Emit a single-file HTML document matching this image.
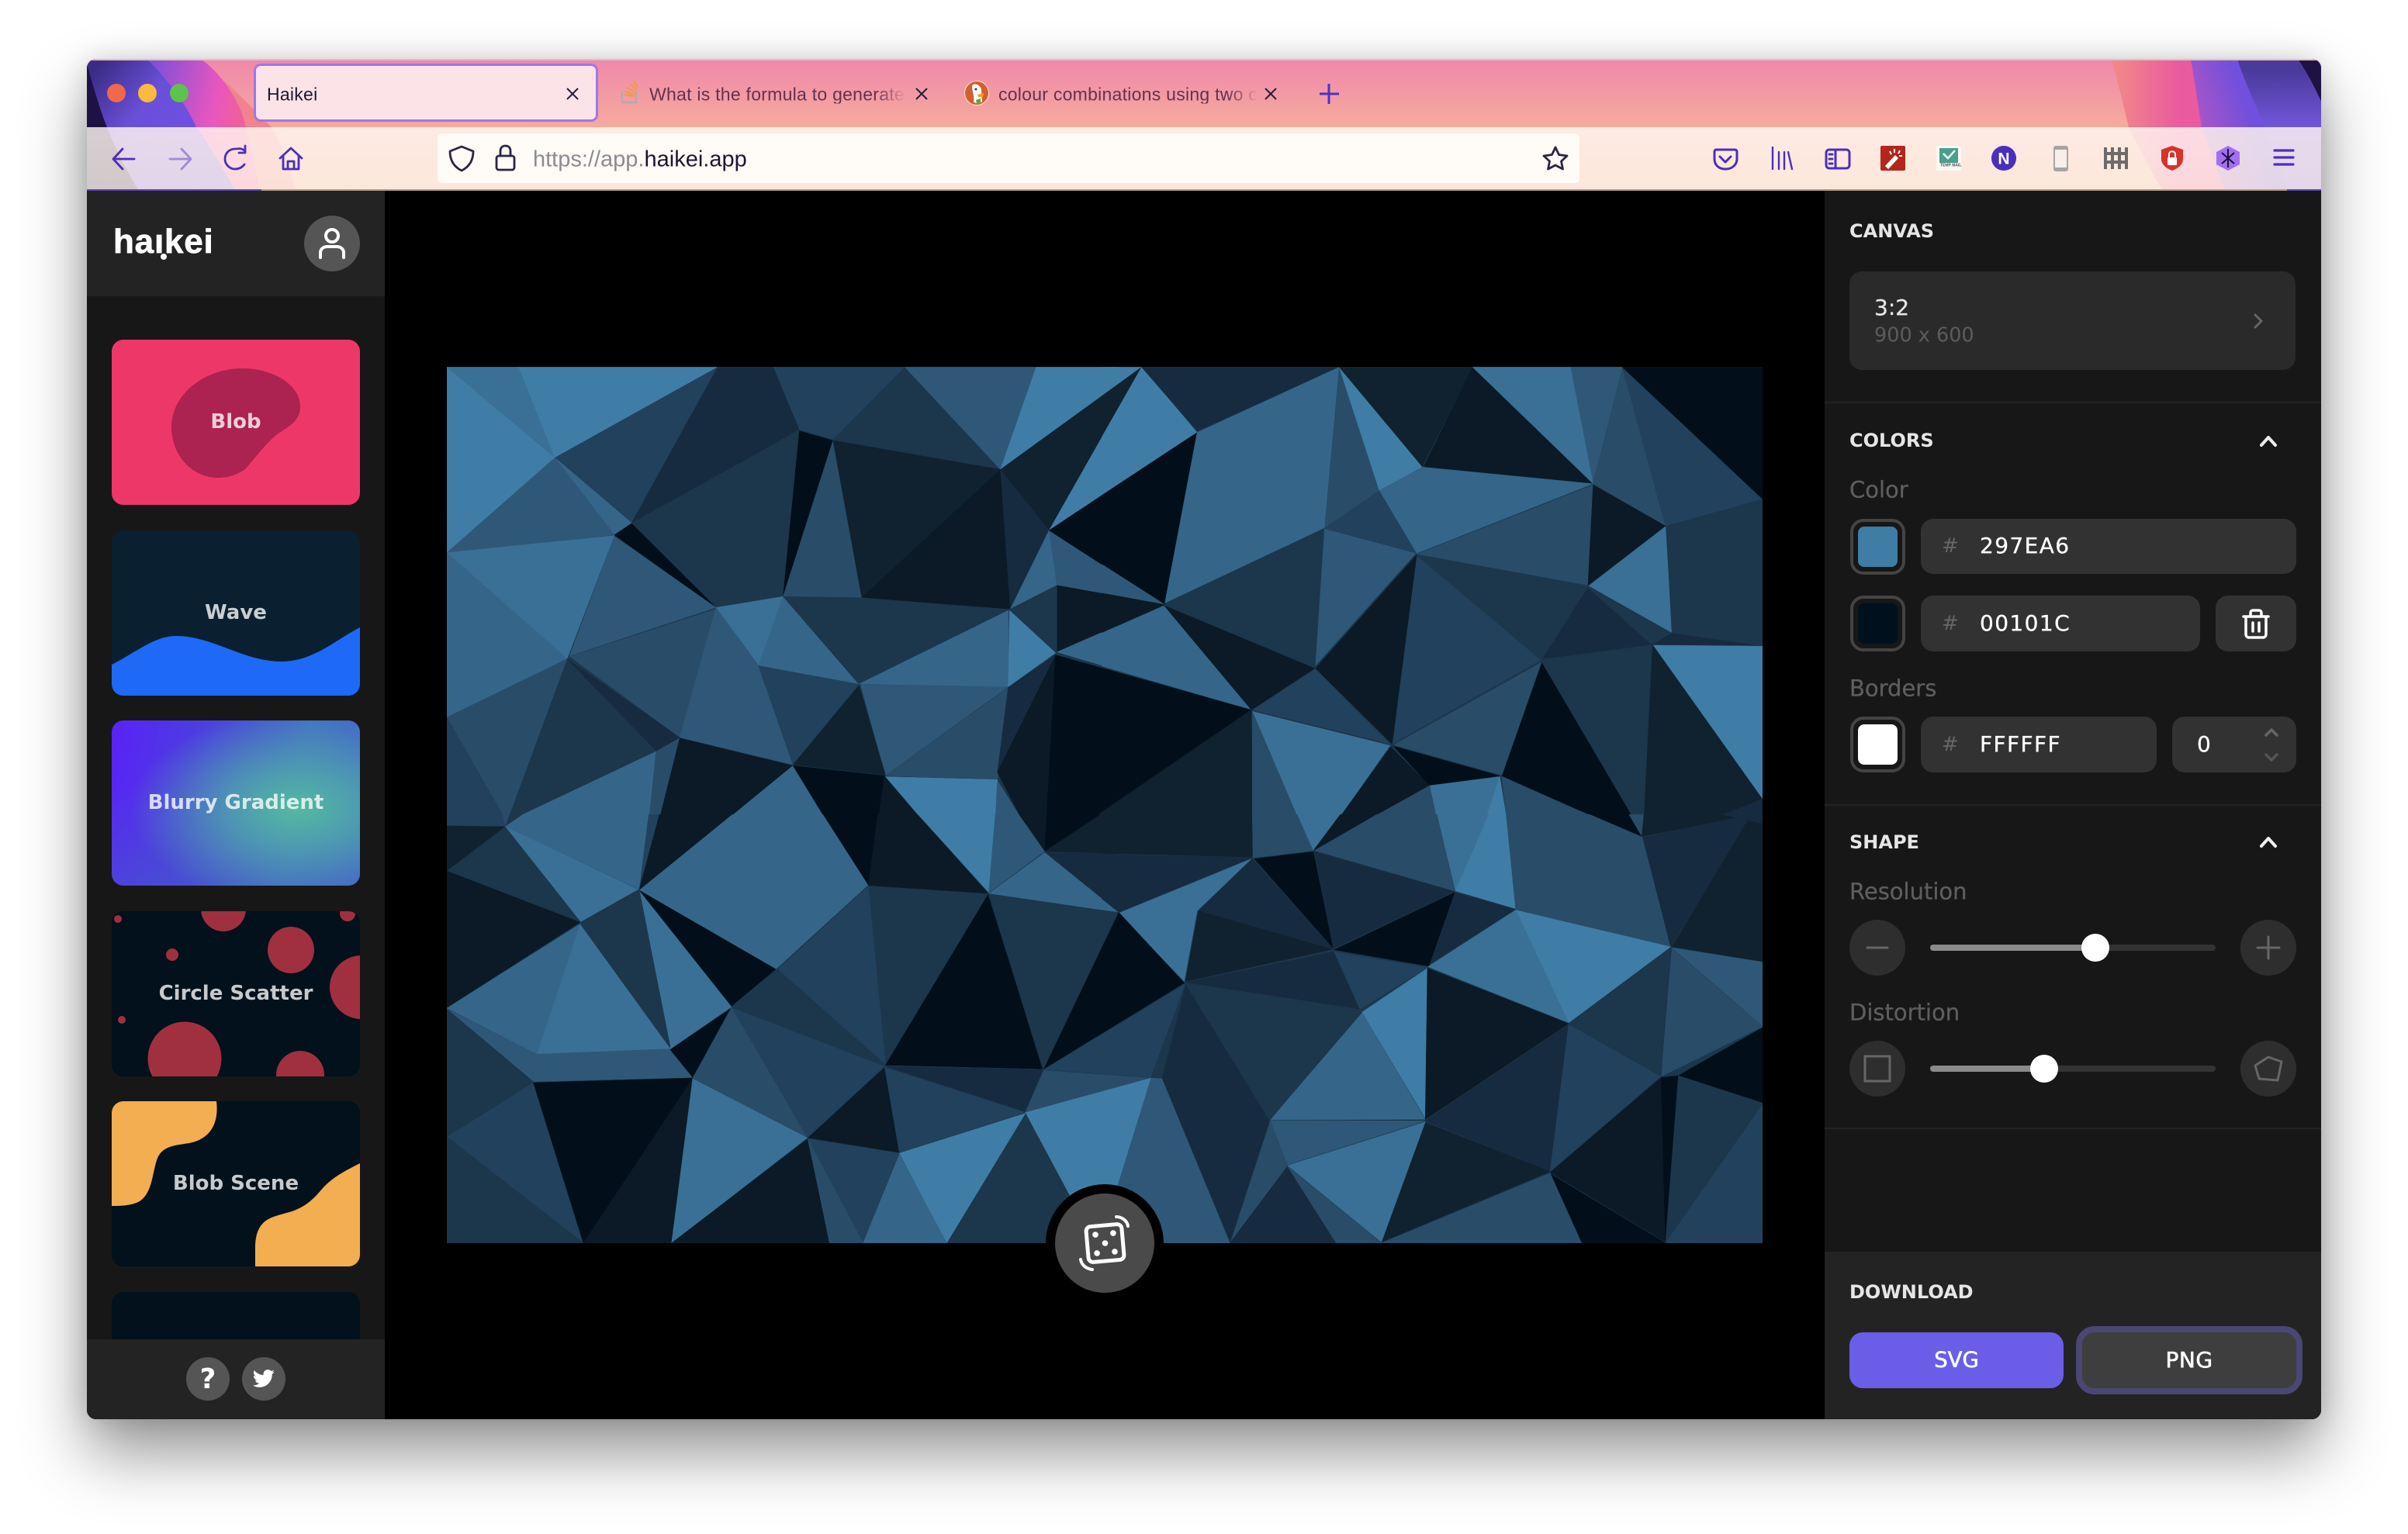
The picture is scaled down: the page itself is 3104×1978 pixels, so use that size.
<!DOCTYPE html>
<html lang="en"><head><meta charset="utf-8"><title>Haikei</title>
<style>
html,body{margin:0;padding:0;background:#fff;width:3104px;height:1978px;overflow:hidden}
#clip{position:absolute;left:0;top:0;width:3104px;height:1978px;clip-path:inset(76px 112px 148px 112px round 12px);background:#000}
#shadow{position:absolute;left:112px;top:76px;width:2880px;height:1754px;border-radius:12px;box-shadow:0 44px 84px rgba(0,0,0,.42),0 0 34px rgba(0,0,0,.14)}
.b{position:absolute}
.t{position:absolute;white-space:nowrap;line-height:1;transform:translateY(-50%);font-family:"DejaVu Sans",sans-serif}
.ff{font-family:"Liberation Sans",sans-serif}
.h{font-weight:700;font-size:24px;color:#e6e6e6;left:2384px}
.lab{font-size:29px;color:#5e5e5e;left:2384px;-webkit-text-stroke:.3px #5e5e5e}
.val{font-size:28px;color:#fff;left:2552px;letter-spacing:1.4px;-webkit-text-stroke:.3px #fff}
.hash{font-size:26px;color:#666;left:2503px}
.inp{position:absolute;background:#323232;border-radius:16px}
.sw{position:absolute;left:2385px;width:71px;height:72px;box-sizing:border-box;border:4px solid #444;border-radius:17px;background:#171717}
.sw i{position:absolute;left:6px;top:6px;width:51px;height:52px;border-radius:8px;display:block}
.card{position:absolute;left:144px;width:320px;height:213px;border-radius:15px;overflow:hidden}
.card svg{position:absolute;left:0;top:0}
.card span{position:absolute;left:0;right:0;top:105.5px;transform:translateY(-50%);text-align:center;font:700 26px/1 "DejaVu Sans",sans-serif;color:rgba(255,255,255,.78);white-space:nowrap}
.l1{fill:#3f7da6;stroke:#3f7da6}.l2{fill:#3a7096;stroke:#3a7096}.l3{fill:#35668a;stroke:#35668a}.l4{fill:#2f5878;stroke:#2f5878}.l5{fill:#294c69;stroke:#294c69}.l6{fill:#22415c;stroke:#22415c}.l7{fill:#1c364c;stroke:#1c364c}.l8{fill:#172b40;stroke:#172b40}.l9{fill:#10222f;stroke:#10222f}.l10{fill:#0b1a26;stroke:#0b1a26}.l11{fill:#020f1a;stroke:#020f1a}
polygon{stroke-width:1}
.tab{letter-spacing:.26px}
</style></head><body>
<div id="shadow"></div>
<div id="clip">

<!-- title bar -->
<svg class="b" style="left:0;top:0" width="3104" height="246" viewBox="0 0 3104 246">
<defs>
<linearGradient id="tb" x1="0" y1="76" x2="0" y2="164" gradientUnits="userSpaceOnUse"><stop offset="0" stop-color="#f087ab"/><stop offset="1" stop-color="#f5ab9d"/></linearGradient>
<linearGradient id="lp" x1="130" y1="80" x2="240" y2="170" gradientUnits="userSpaceOnUse"><stop offset="0" stop-color="#3a2c85"/><stop offset=".55" stop-color="#6a4fd8"/><stop offset="1" stop-color="#6d50e2"/></linearGradient>
<linearGradient id="lm" x1="190" y1="100" x2="310" y2="130" gradientUnits="userSpaceOnUse"><stop offset="0" stop-color="#7c50d8"/><stop offset=".75" stop-color="#e856bf"/><stop offset="1" stop-color="#ee5fa0"/></linearGradient>
<linearGradient id="rm" x1="2730" y1="0" x2="2830" y2="0" gradientUnits="userSpaceOnUse"><stop offset="0" stop-color="#f0868a"/><stop offset=".8" stop-color="#ea5a9e"/></linearGradient>
<linearGradient id="rq" x1="0" y1="90" x2="0" y2="170" gradientUnits="userSpaceOnUse"><stop offset="0" stop-color="#4a3a9a"/><stop offset="1" stop-color="#7558e0"/></linearGradient>
<linearGradient id="rmm" x1="2838" y1="164" x2="2960" y2="120" gradientUnits="userSpaceOnUse"><stop offset="0" stop-color="#a855c8"/><stop offset=".5" stop-color="#7050dc"/></linearGradient>
<linearGradient id="tbar" x1="0" y1="164" x2="0" y2="246" gradientUnits="userSpaceOnUse"><stop offset="0" stop-color="#fff8f2" stop-opacity=".82"/><stop offset="1" stop-color="#fff6ea" stop-opacity=".8"/></linearGradient>
</defs>
<rect x="100" y="70" width="2900" height="176" fill="#f5ab9d"/>
<rect x="100" y="70" width="2900" height="94" fill="url(#tb)"/>
<path d="M255 76 C300 110 335 150 350 164 C365 190 375 220 382 250 L100 250 V76Z" fill="#f0838c"/>
<path d="M259 76 C285 95 310 130 317 164 C325 195 330 225 336 250 L100 250 V76Z" fill="url(#lm)"/>
<path d="M189 76 C215 100 240 135 253 164 C275 195 292 225 306 250 L100 250 V76Z" fill="url(#lp)"/>
<path d="M110 76 C120 110 128 140 138 164 C150 195 165 225 182 250 L100 250 V76Z" fill="#1e1245"/>
<path d="M2722 76 C2730 105 2737 135 2744 164 C2760 195 2775 225 2790 250 L3000 250 V76Z" fill="url(#rm)"/>
<path d="M2824 76 C2830 110 2834 140 2838 164 L2870 250 L3000 250 V76Z" fill="url(#rmm)"/>
<path d="M2884 76 C2895 110 2910 140 2920 164 L2950 250 L3000 250 V76Z" fill="url(#rq)"/>
<path d="M2962 76 C2975 95 2985 115 2994 135 V76Z" fill="#1e1245"/>
<rect x="100" y="164" width="2900" height="82" fill="url(#tbar)"/>
<rect x="100" y="76" width="2900" height="2" fill="#e8b8c4"/>
<rect x="100" y="244" width="2900" height="2" fill="#b09a8c"/>
<rect x="112" y="244" width="225" height="2" fill="#5a46b0"/>
<rect x="2948" y="244" width="44" height="2" fill="#5a46b0"/>
<circle cx="150" cy="120" r="12" fill="#f0684e"/><circle cx="190" cy="120" r="12" fill="#f8bb3e"/><circle cx="231" cy="120" r="12" fill="#5ec24e"/>
</svg>

<!-- active tab -->
<div class="b" style="left:327px;top:82px;width:444px;height:75px;box-sizing:border-box;border:3px solid #9c78ea;border-radius:9px;background:#fbe3e8"></div>
<div class="t ff tab" style="left:344px;top:122px;font-size:23px;color:#1c1630">Haikei</div>
<svg class="b" style="left:0;top:0" width="3104" height="246" viewBox="0 0 3104 246" fill="none" stroke="#241c3c" stroke-width="2">
<path d="M731 114L745 128M745 114L731 128"/><path d="M1181 114L1195 128M1195 114L1181 128"/><path d="M1631 114L1645 128M1645 114L1631 128"/>
<path d="M1713 108V134M1701 121H1726" stroke="#5030c8" stroke-width="3"/>
<!-- nav -->
<g stroke="#4a2fbd" stroke-width="2.8" stroke-linecap="round" stroke-linejoin="round">
<path d="M146 205H173M158 192L146 205L158 218"/>
<path d="M219 205H246M234 192L246 205L234 218" opacity=".45"/>
<path d="M316 195C311 190 306 192 303 192C295 192 290 198 290 205C290 212 296 218 303 218C308 218 312 216 315 212"/><path d="M316 188V197H308" />
<path d="M361 204L375 191L389 204M365 201V218H385V201M371 218V208H379V218"/>
</g>
<!-- so icon -->
<g stroke="#f09a50" stroke-width="2.4"><path d="M805 122L817 124M806 118L818 122M808 113L819 119M812 108L821 116M817 104L822 113"/></g>
<path d="M802 118V132H820V118" stroke="#b8a8a8" stroke-width="2.4"/>
</svg>
<!-- ddg -->
<svg class="b" style="left:1243px;top:104px" width="32" height="32" viewBox="0 0 32 32"><circle cx="16" cy="16" r="15.500" fill="#d2602f" stroke="#f6e4d8" stroke-width="1"/><path d="M11 5C17 3 23 8 22 15L23 27C18 30 13 29 12 27C14 20 8 10 11 5Z" fill="#fff"/><circle cx="15" cy="11" r="1.500" fill="#2a3a6a"/><path d="M17 18L25 16L24 21L18 21Z" fill="#f0a020"/><path d="M15 25L21 23L21 28L16 29Z" fill="#5aa040"/></svg>
<div class="t ff tab" style="left:837px;top:122px;width:331px;overflow:hidden;font-size:23px;color:#66304e;-webkit-mask-image:linear-gradient(90deg,#000 88%,transparent 100%);mask-image:linear-gradient(90deg,#000 88%,transparent 100%)">What is the formula to generate a random colour</div>
<div class="t ff tab" style="left:1287px;top:122px;width:335px;overflow:hidden;font-size:23px;color:#66304e;-webkit-mask-image:linear-gradient(90deg,#000 88%,transparent 100%);mask-image:linear-gradient(90deg,#000 88%,transparent 100%)">colour combinations using two colours</div>

<!-- url -->
<div class="b" style="left:564px;top:172px;width:1472px;height:64px;border-radius:6px;background:#fffbf6"></div>
<svg class="b" style="left:0;top:0" width="3104" height="246" viewBox="0 0 3104 246" fill="none">
<g stroke="#2b2540" stroke-width="2.8" stroke-linecap="round" stroke-linejoin="round">
<path d="M595 189L610 195C610 207 605 215 595 220C585 215 580 207 580 195Z"/>
<rect x="640" y="201" width="23" height="18" rx="3"/><path d="M645 201V195C645 190 648 188 651.500 188C655 188 658 190 658 195V201"/>
<path d="M2005 190L2009.500 199.500L2020 201L2012.500 208L2014.500 218L2005 213L1995.500 218L1997.500 208L1990 201L2000.500 199.500Z"/>
</g>
<!-- toolbar icons -->
<g stroke="#4a2fbd" stroke-width="3" stroke-linecap="round" stroke-linejoin="round">
<path d="M2212 193H2236C2238 193 2239 194 2239 196V205C2239 213 2232 218 2224 218C2216 218 2210 213 2210 205V196C2210 194 2211 193 2212 193Z"/><path d="M2217 202L2224 209L2231 202"/>
<path d="M2285 190V218M2293 196V218M2300 196V218M2305 196L2310 218" stroke-width="2.400"/>
<rect x="2354" y="193" width="30" height="24" rx="4"/><path d="M2366 193V217M2358 199H2362M2358 205H2362M2358 211H2362"/>
<path d="M2932 194H2956M2932 203H2956M2932 212H2956" stroke-width="3.200"/>
</g>
<rect x="2424" y="188" width="32" height="32" rx="2" fill="#b3261c"/>
<path d="M2430 214L2443 200L2447 204L2434 218Z" fill="#fff"/><path d="M2442 192V197M2449 194L2447 198M2452 201H2448M2436 195L2438 199" stroke="#fff" stroke-width="2"/>
<rect x="2496" y="188" width="32" height="32" rx="2" fill="#fbf8f4"/><rect x="2500" y="191" width="24" height="19" fill="#4aa08c"/><path d="M2505 198L2511 204L2520 194" stroke="#fff" stroke-width="2.400"/>
<circle cx="2583" cy="204" r="16" fill="#4a2fbd"/>
<rect x="2648" y="189" width="17" height="31" rx="2" fill="#f8efe9" stroke="#a8a4a4" stroke-width="2"/><rect x="2648" y="189" width="17" height="4" fill="#a8a4a4"/><rect x="2648" y="216" width="17" height="4" fill="#a8a4a4"/>
<g stroke="#6e6a6a" stroke-width="4"><path d="M2714 190V218M2723 190V218M2732 190V218M2741 190V218M2712 198H2743M2712 209H2743" /></g>
<path d="M2800 188L2814 193V205C2814 212 2808 217 2800 220C2792 217 2786 212 2786 205V193Z" fill="#d8322a"/><rect x="2794" y="203" width="12" height="10" rx="1" fill="#fff"/><path d="M2796 203V199C2796 194 2804 194 2804 199V203" stroke="#fff" stroke-width="2"/>
<path d="M2872 188L2887 196V212L2872 220L2857 212V196Z" fill="#a36ef0"/><path d="M2872 192V216M2864 197L2880 211M2880 197L2864 211" stroke="#1c1040" stroke-width="2"/>
</svg>
<div class="t" style="left:2574px;top:205px;width:18px;text-align:center;font:700 21px/1 'Liberation Sans',sans-serif;color:#fff">N</div>
<div class="t ff" style="left:2501px;top:214px;font-size:5px;font-weight:700;color:#555">TEMP MAIL</div>
<div class="t ff" style="left:687px;top:206px;font-size:29px;color:#8e8a94">https://app.<span style="color:#1c1630">haikei.app</span></div>

<!-- sidebar -->
<div class="b" style="left:112px;top:246px;width:384px;height:1590px;background:#171717"></div>
<div class="b" style="left:112px;top:246px;width:384px;height:136px;background:#232323"></div>
<div class="t ff" style="left:146px;top:312px;font-size:44px;font-weight:700;color:#fff;letter-spacing:.8px;-webkit-text-stroke:.7px #fff">ha<span>ı</span>kei</div>
<div class="b" style="left:207px;top:327px;width:8px;height:8px;border-radius:50%;background:#fff"></div>
<div class="b" style="left:392px;top:278px;width:72px;height:72px;border-radius:50%;background:#555"></div>
<svg class="b" style="left:392px;top:278px" width="72" height="72" viewBox="392 278 72 72" fill="none" stroke="#fff" stroke-width="4" stroke-linecap="round"><circle cx="428" cy="304" r="8"/><path d="M413 332V326C413 321 417 318 422 318H434C439 318 443 321 443 326V332"/></svg>

<div class="card" style="top:438px;background:#ee3769">
<svg width="320" height="213"><path d="M169 37C205 37 243 56 243 87C243 102 232 110 219 118C205 127 195 140 172 167C160 175 150 178 136 178C105 178 77 150 77 113C77 70 120 37 169 37Z" fill="#ac2250"/></svg><span>Blob</span></div>
<div class="card" style="top:684px;background:#0a2030">
<svg width="320" height="213"><path d="M0 173C30 158 55 136 83 136C130 136 170 169 219 169C260 169 290 140 320 125V213H0Z" fill="#1f69f8"/></svg><span>Wave</span></div>
<div class="card" style="top:929px;background:radial-gradient(ellipse 215px 125px at 239px 114px,#54b9a0 0%,rgba(80,170,170,.78) 38%,rgba(70,125,190,0) 100%),linear-gradient(180deg,rgba(70,90,200,0) 40%,rgba(70,90,200,.5) 100%),linear-gradient(100deg,#5a22f8 0%,#4c3ce0 30%,#4370c4 72%,#4462cc 100%)"><span>Blurry Gradient</span></div>
<div class="card" style="top:1175px;background:#02111c">
<svg width="320" height="213" fill="#a03040"><circle cx="144" cy="-3" r="29"/><circle cx="8" cy="10" r="5"/><circle cx="304" cy="3" r="10"/><circle cx="231" cy="50" r="30"/><circle cx="78" cy="56" r="8"/><circle cx="322" cy="98" r="41"/><circle cx="13" cy="140" r="5"/><circle cx="94" cy="190" r="47.500"/><circle cx="243" cy="211" r="31"/></svg><span>Circle Scatter</span></div>
<div class="card" style="top:1420px;background:#02111c">
<svg width="320" height="213" fill="#f2ae50"><path d="M0 0H135C138 25 130 48 100 54C80 57 64 58 58 76C52 95 52 118 36 129C25 135 10 135 0 135Z"/><path d="M320 80C300 90 285 98 272 112C262 124 250 138 225 144C205 150 185 152 185 190V213H320Z"/></svg><span>Blob Scene</span></div>
<div class="card" style="top:1666px;background:#02111c"></div>

<div class="b" style="left:112px;top:1727px;width:384px;height:110px;background:#232323"></div>
<div class="b" style="left:240px;top:1750px;width:56px;height:56px;border-radius:50%;background:#555"></div>
<div class="b" style="left:312px;top:1750px;width:56px;height:56px;border-radius:50%;background:#555"></div>
<div class="t" style="left:240px;top:1779px;width:56px;text-align:center;font:700 36px/1 'DejaVu Sans',sans-serif;color:#fff">?</div>
<svg class="b" style="left:325px;top:1763px" width="30" height="30" viewBox="0 0 24 24" fill="#fff"><path d="M23 4.500c-.8.400-1.700.600-2.600.800.900-.600 1.600-1.400 2-2.500-.900.500-1.800.900-2.900 1.100C18.700 2.900 17.500 2.400 16.200 2.400c-2.500 0-4.600 2-4.600 4.600 0 .400 0 .700.100 1C7.900 7.800 4.500 6 2.200 3.200c-.400.700-.600 1.500-.600 2.300 0 1.600.800 3 2 3.800-.800 0-1.500-.200-2.100-.6v.1c0 2.200 1.600 4.100 3.700 4.500-.400.100-.800.200-1.200.200-.300 0-.600 0-.900-.100.600 1.800 2.300 3.200 4.300 3.200-1.600 1.200-3.600 2-5.700 2-.400 0-.700 0-1.100-.1C2.600 19.900 5 20.600 7.600 20.600c8.400 0 13-7 13-13v-.6c.900-.6 1.700-1.500 2.400-2.500z"/></svg>

<!-- canvas -->
<svg class="b" style="left:576px;top:473px" width="1696" height="1130" viewBox="576 473 1696 1130">
<rect x="576" y="473" width="1696" height="1130" fill="#1c364c"/>
<svg x="570" y="460" width="870" height="600" viewBox="0 0 1568 1568" preserveAspectRatio="none">
<polygon class="l1" points="11,35 262,340 11,660"/>
<polygon class="l2" points="11,35 178,35 262,340"/>
<polygon class="l1" points="178,35 640,35 262,340"/>
<polygon class="l6" points="262,340 640,35 440,560"/>
<polygon class="l8" points="640,35 770,35 830,245 440,560"/>
<polygon class="l6" points="770,35 1075,35 908,280 830,245"/>
<polygon class="l7" points="1075,35 1297,380 908,280"/>
<polygon class="l4" points="1075,35 1380,35 1297,380"/>
<polygon class="l1" points="1380,35 1625,35 1297,380"/>
<polygon class="l9" points="1297,380 1625,35 1410,585"/>
<polygon class="l1" points="1625,35 1753,255 1410,585"/>
<polygon class="l3" points="262,340 440,560 400,600"/>
<polygon class="l4" points="262,340 400,600 11,660"/>
<polygon class="l7" points="440,560 830,250 792,808 636,845"/>
<polygon class="l11" points="400,600 440,562 636,845"/>
<polygon class="l11" points="830,250 908,282 792,808"/>
<polygon class="l5" points="908,282 975,812 792,808"/>
<polygon class="l9" points="908,282 1297,380 975,812"/>
<polygon class="l10" points="1297,380 1320,850 975,812"/>
<polygon class="l8" points="1297,380 1410,585 1320,850"/>
<polygon class="l3" points="1410,585 1428,770 1320,850"/>
<polygon class="l4" points="1410,585 1676,835 1428,770"/>
<polygon class="l11" points="1410,585 1753,255 1676,835"/>
<polygon class="l10" points="1428,770 1676,835 1428,995"/>
<polygon class="l7" points="1320,850 1428,770 1428,995"/>
<polygon class="l2" points="11,660 400,602 290,1018"/>
<polygon class="l4" points="400,605 636,845 296,1008"/>
<polygon class="l3" points="11,660 290,1018 11,1215"/>
<polygon class="l5" points="296,1010 636,850 552,1283"/>
<polygon class="l2" points="636,845 792,808 735,1040"/>
<polygon class="l3" points="792,808 968,1103 735,1040"/>
<polygon class="l4" points="636,845 735,1040 815,1375 552,1283"/>
<polygon class="l6" points="735,1042 968,1103 815,1375"/>
<polygon class="l7" points="792,808 975,812 1320,852 968,1103"/>
<polygon class="l3" points="968,1103 1315,855 1315,1112"/>
<polygon class="l1" points="1318,855 1425,998 1315,1112"/>
<polygon class="l4" points="972,1105 1315,1112 1030,1410"/>
<polygon class="l5" points="1315,1115 1290,1425 1030,1412"/>
<polygon class="l9" points="968,1108 1030,1410 815,1375"/>
<polygon class="l7" points="290,1018 497,1328 150,1568"/>
<polygon class="l8" points="290,1018 552,1283 497,1328"/>
<polygon class="l5" points="11,1215 290,1018 150,1568"/>
<polygon class="l6" points="11,1215 150,1568 11,1568"/>
<polygon class="l3" points="497,1330 480,1568 150,1568"/>
<polygon class="l5" points="552,1285 497,1330 480,1568 503,1568"/>
<polygon class="l10" points="552,1285 815,1378 655,1568 503,1568"/>
<polygon class="l3" points="815,1378 895,1568 655,1568"/>
<polygon class="l11" points="815,1378 1028,1412 1012,1568 895,1568"/>
<polygon class="l10" points="1028,1412 1120,1568 1012,1568"/>
<polygon class="l1" points="1030,1415 1290,1425 1285,1568 1120,1568"/>
<polygon class="l4" points="1290,1428 1350,1568 1285,1568"/>
<polygon class="l8" points="1315,1115 1425,1005 1290,1400"/>
<polygon class="l10" points="1290,1400 1425,1005 1405,1568 1350,1568"/>
<polygon class="l11" points="1425,1005 1880,1190 1400,1665"/>
<polygon class="l9" points="1400,1665 1880,1190 1880,1665"/>
<polygon class="l3" points="1428,995 1676,838 1880,1190"/>
</svg>
<svg x="1420" y="460" width="870" height="600" viewBox="0 0 1568 1568" preserveAspectRatio="none">
<polygon class="l1" points="-152,35 93,35 -235,380"/>
<polygon class="l9" points="-235,380 93,35 -122,585"/>
<polygon class="l1" points="93,35 222,255 -123,585"/>
<polygon class="l11" points="-123,585 222,255 147,835"/>
<polygon class="l4" points="-123,585 147,835 -100,770"/>
<polygon class="l10" points="-100,770 147,835 -100,995"/>
<polygon class="l3" points="-104,998 147,838 348,1190"/>
<polygon class="l11" points="-107,1005 348,1190 -132,1665"/>
<polygon class="l9" points="-132,1665 348,1190 352,1665"/>
<polygon class="l8" points="93,35 552,35 222,250"/>
<polygon class="l3" points="222,255 552,35 520,575 147,830"/>
<polygon class="l5" points="552,35 645,450 518,578"/>
<polygon class="l1" points="552,35 745,372 645,450"/>
<polygon class="l9" points="552,35 862,35 745,370"/>
<polygon class="l10" points="862,35 1142,428 748,372"/>
<polygon class="l2" points="862,35 1090,35 1142,428"/>
<polygon class="l4" points="1090,35 1210,35 1142,420"/>
<polygon class="l5" points="1210,35 1310,570 1142,428"/>
<polygon class="l6" points="1210,35 1536,480 1310,570"/>
<polygon class="l11" points="1210,35 1536,35 1536,480"/>
<polygon class="l3" points="645,450 748,372 1142,428 732,662"/>
<polygon class="l6" points="518,578 645,452 730,660"/>
<polygon class="l5" points="732,665 1142,432 1130,770"/>
<polygon class="l10" points="1142,432 1310,570 1130,770"/>
<polygon class="l2" points="1310,572 1325,930 1132,772"/>
<polygon class="l7" points="1312,572 1536,480 1536,975 1325,932"/>
<polygon class="l7" points="148,835 518,580 497,1048"/>
<polygon class="l4" points="518,580 730,662 497,1040"/>
<polygon class="l7" points="730,668 1130,775 1020,1020"/>
<polygon class="l6" points="730,668 1020,1022 675,1305"/>
<polygon class="l10" points="732,668 675,1305 497,1050"/>
<polygon class="l10" points="145,838 495,1050 348,1190"/>
<polygon class="l6" points="497,1052 670,1305 352,1190"/>
<polygon class="l2" points="350,1195 670,1310 545,1568 460,1568"/>
<polygon class="l5" points="350,1195 460,1568 350,1568"/>
<polygon class="l8" points="1130,778 1278,970 1025,1018"/>
<polygon class="l7" points="1130,778 1325,932 1278,970"/>
<polygon class="l8" points="1325,932 1536,975 1280,970"/>
<polygon class="l7" points="1025,1022 1278,972 1260,1568"/>
<polygon class="l9" points="1280,972 1536,1490 1536,1568 1260,1568"/>
<polygon class="l1" points="1282,972 1536,975 1536,1490"/>
<polygon class="l11" points="1022,1030 1240,1568 1170,1568 930,1412"/>
<polygon class="l5" points="1022,1030 930,1410 678,1308"/>
<polygon class="l11" points="678,1312 925,1412 762,1445"/>
<polygon class="l10" points="672,1315 762,1445 610,1568 545,1568"/>
<polygon class="l2" points="762,1445 925,1415 890,1568 780,1568"/>
<polygon class="l1" points="925,1415 942,1568 890,1568"/>
<polygon class="l5" points="930,1415 1170,1568 942,1568"/>
<polygon class="l5" points="762,1445 780,1568 610,1568"/>
<polygon class="l8" points="1536,1490 1536,1568 1400,1568"/>
</svg>
<svg x="570" y="1050" width="870" height="620" viewBox="0 0 1568 1568" preserveAspectRatio="none">
<polygon class="l6" points="11,0 140,0 147,40 11,35"/>
<polygon class="l5" points="140,0 157,0 147,40"/>
<polygon class="l7" points="157,0 188,0 147,40"/>
<polygon class="l9" points="11,38 147,40 11,185"/>
<polygon class="l7" points="147,40 320,352 11,185"/>
<polygon class="l10" points="11,185 320,352 11,630"/>
<polygon class="l2" points="147,40 455,245 322,350"/>
<polygon class="l3" points="147,40 188,0 480,0 458,245"/>
<polygon class="l6" points="480,0 505,0 458,245"/>
<polygon class="l10" points="505,0 675,0 458,245"/>
<polygon class="l3" points="675,0 885,0 990,230 775,505 458,248"/>
<polygon class="l11" points="885,0 1012,0 990,230"/>
<polygon class="l10" points="1012,0 1105,0 1268,258 990,232"/>
<polygon class="l1" points="1105,0 1285,0 1270,255"/>
<polygon class="l4" points="1285,0 1340,0 1400,120 1270,255"/>
<polygon class="l10" points="1340,0 1405,0 1400,120"/>
<polygon class="l11" points="1405,0 1530,0 1400,120"/>
<polygon class="l9" points="1530,0 1700,0 1700,130 1400,122"/>
<polygon class="l8" points="1400,125 1700,130 1572,320"/>
<polygon class="l3" points="1400,125 1572,320 1270,258"/>
<polygon class="l7" points="990,235 1268,260 1030,815"/>
<polygon class="l6" points="990,235 1030,815 780,505"/>
<polygon class="l11" points="458,248 775,505 672,625"/>
<polygon class="l2" points="458,250 672,628 530,765"/>
<polygon class="l7" points="458,248 320,355 530,760"/>
<polygon class="l2" points="320,358 530,765 220,782"/>
<polygon class="l3" points="320,358 220,782 11,632"/>
<polygon class="l4" points="11,635 220,782 530,765 582,858 212,872"/>
<polygon class="l11" points="530,768 672,632 582,858"/>
<polygon class="l7" points="775,508 1028,820 672,628"/>
<polygon class="l6" points="672,630 1028,822 848,1055"/>
<polygon class="l5" points="672,630 848,1055 582,860"/>
<polygon class="l7" points="11,635 212,872 11,1052"/>
<polygon class="l6" points="11,1052 212,875 328,1398"/>
<polygon class="l7" points="11,1052 328,1398 11,1398"/>
<polygon class="l11" points="212,875 582,860 328,1398"/>
<polygon class="l10" points="582,862 533,1398 328,1398"/>
<polygon class="l2" points="582,862 848,1055 533,1398"/>
<polygon class="l10" points="848,1060 900,1398 533,1398"/>
<polygon class="l6" points="850,1058 1062,1105 978,1398 900,1398"/>
<polygon class="l5" points="850,1060 978,1398 900,1398"/>
<polygon class="l10" points="850,1055 1028,825 1062,1103"/>
<polygon class="l6" points="1028,825 1355,972 1062,1103"/>
<polygon class="l8" points="1030,822 1395,832 1355,970"/>
<polygon class="l11" points="1030,818 1268,262 1395,830"/>
<polygon class="l7" points="1270,262 1568,320 1395,830"/>
<polygon class="l11" points="1572,320 1723,550 1398,830"/>
<polygon class="l6" points="1398,832 1725,555 1647,858"/>
<polygon class="l5" points="1398,835 1647,860 1355,970"/>
<polygon class="l1" points="1355,972 1647,860 1570,1205 1640,1398 1460,1250"/>
<polygon class="l7" points="1355,975 1460,1250 1500,1398 1172,1398"/>
<polygon class="l1" points="1062,1105 1355,975 1172,1398"/>
<polygon class="l3" points="1062,1110 1172,1398 978,1398"/>
</svg>
<svg x="1420" y="1050" width="870" height="620" viewBox="0 0 1568 1568" preserveAspectRatio="none">
<polygon class="l9" points="-132,0 350,0 350,140 -132,122"/>
<polygon class="l5" points="350,0 455,0 492,118 352,142"/>
<polygon class="l2" points="455,0 555,0 492,118"/>
<polygon class="l10" points="555,0 640,0 492,118"/>
<polygon class="l5" points="640,0 780,0 820,250 495,118"/>
<polygon class="l2" points="780,0 900,0 822,250"/>
<polygon class="l1" points="900,0 940,0 962,308 822,250"/>
<polygon class="l5" points="940,0 1135,0 1255,72 1322,432 962,310"/>
<polygon class="l11" points="1135,0 1225,0 1255,72"/>
<polygon class="l5" points="1225,0 1262,0 1255,72"/>
<polygon class="l9" points="1260,0 1520,0 1255,72"/>
<polygon class="l8" points="1258,75 1510,0 1322,432"/>
<polygon class="l9" points="1510,0 1536,0 1536,480 1325,432"/>
<polygon class="l8" points="1440,0 1536,-10 1536,30"/>
<polygon class="l4" points="1325,435 1536,482 1536,690"/>
<polygon class="l5" points="1325,438 1536,692 1300,855"/>
<polygon class="l7" points="1320,438 1300,855 1085,682"/>
<polygon class="l1" points="962,312 1322,432 1085,680"/>
<polygon class="l2" points="962,312 1085,680 758,497"/>
<polygon class="l8" points="820,255 962,310 760,490"/>
<polygon class="l11" points="820,255 760,495 540,442"/>
<polygon class="l8" points="495,122 820,252 537,438"/>
<polygon class="l11" points="355,145 492,122 537,435"/>
<polygon class="l8" points="350,145 537,438 225,315"/>
<polygon class="l9" points="225,315 537,440 195,545"/>
<polygon class="l8" points="540,448 600,635 195,548"/>
<polygon class="l6" points="540,448 757,500 600,635"/>
<polygon class="l1" points="757,502 752,990 605,645"/>
<polygon class="l10" points="757,502 1085,682 752,995"/>
<polygon class="l8" points="752,1000 1085,685 1042,1165"/>
<polygon class="l6" points="1085,685 1298,855 1042,1165"/>
<polygon class="l10" points="1300,858 1310,1395 1042,1168"/>
<polygon class="l11" points="1300,858 1340,852 1310,1398"/>
<polygon class="l11" points="1340,852 1536,695 1536,940"/>
<polygon class="l7" points="1340,852 1536,942 1310,1398"/>
<polygon class="l6" points="1536,945 1536,1398 1310,1398"/>
<polygon class="l11" points="1042,1172 1310,1398 1115,1398"/>
<polygon class="l5" points="1042,1170 1115,1398 650,1398"/>
<polygon class="l9" points="752,1005 1042,1165 650,1395"/>
<polygon class="l2" points="752,1003 650,1395 432,1145"/>
<polygon class="l4" points="392,998 752,1000 432,1142"/>
<polygon class="l3" points="605,648 752,995 392,996"/>
<polygon class="l7" points="600,645 392,996 195,550"/>
<polygon class="l8" points="195,555 140,858 298,1395 390,1000"/>
<polygon class="l3" points="-132,125 40,320 -262,258"/>
<polygon class="l8" points="-132,125 350,142 40,320"/>
<polygon class="l2" points="40,322 348,145 222,315 192,545"/>
<polygon class="l7" points="-262,262 40,320 -137,830"/>
<polygon class="l11" points="40,320 192,550 -134,830"/>
<polygon class="l6" points="-134,832 193,555 115,858"/>
<polygon class="l7" points="195,555 115,858 140,858"/>
<polygon class="l5" points="-134,835 115,860 -177,970"/>
<polygon class="l1" points="-177,972 115,860 38,1205 108,1398 -72,1250"/>
<polygon class="l4" points="115,860 140,862 38,1210"/>
<polygon class="l4" points="140,862 298,1398 20,1398 38,1210"/>
<polygon class="l5" points="392,1000 432,1145 300,1395"/>
<polygon class="l8" points="432,1148 545,1398 298,1398"/>
<polygon class="l5" points="432,1148 650,1398 545,1398"/>
</svg>
</svg>
<!-- dice -->
<svg class="b" style="left:1340px;top:1520px" width="170" height="170" viewBox="1340 1520 170 170">
<circle cx="1424" cy="1603" r="76" fill="#000"/><circle cx="1424" cy="1603" r="64" fill="#4a4a4a"/>
<g transform="rotate(-5 1424.500 1603)"><rect x="1401.500" y="1580" width="46" height="46" rx="6" fill="none" stroke="#fff" stroke-width="5"/>
<g fill="#fff"><circle cx="1413" cy="1591" r="3.800"/><circle cx="1436" cy="1591" r="3.800"/><circle cx="1424.500" cy="1603" r="3.800"/><circle cx="1413" cy="1615" r="3.800"/><circle cx="1436" cy="1615" r="3.800"/></g></g>
<path d="M1439 1569C1446 1569 1453 1574 1454 1581M1393 1624C1394 1631 1400 1636 1408 1637" fill="none" stroke="#fff" stroke-width="4" stroke-linecap="round"/>
</svg>

<!-- right panel -->
<div class="b" style="left:2352px;top:246px;width:640px;height:1590px;background:#171717"></div>
<div class="b" style="left:2352px;top:518px;width:640px;height:2px;background:#222"></div>
<div class="b" style="left:2352px;top:1037px;width:640px;height:2px;background:#222"></div>
<div class="b" style="left:2352px;top:1454px;width:640px;height:2px;background:#222"></div>
<div class="b" style="left:2352px;top:1614px;width:640px;height:222px;background:#232323"></div>

<div class="t h" style="top:298px">CANVAS</div>
<div class="b" style="left:2384px;top:350px;width:575px;height:127px;background:#2a2a2a;border-radius:16px"></div>
<div class="t" style="left:2416px;top:397px;font-size:28px;color:#e6e6e6;-webkit-text-stroke:.3px #e6e6e6">3:2</div>
<div class="t" style="left:2416px;top:433px;font-size:25.500px;color:#5c5c5c">900 x 600</div>

<div class="t h" style="top:568px">COLORS</div>
<div class="t lab" style="top:632px">Color</div>
<div class="sw" style="top:669px"><i style="background:#3f7da6"></i></div>
<div class="inp" style="left:2476px;top:669px;width:484px;height:71px"></div>
<div class="t hash" style="top:704px">#</div>
<div class="t val" style="top:704px">297EA6</div>
<div class="sw" style="top:768px"><i style="background:#00101c"></i></div>
<div class="inp" style="left:2476px;top:768px;width:360px;height:72px"></div>
<div class="t hash" style="top:804px">#</div>
<div class="t val" style="top:804px">00101C</div>
<div class="inp" style="left:2856px;top:768px;width:104px;height:72px"></div>
<div class="t lab" style="top:888px">Borders</div>
<div class="sw" style="top:924px"><i style="background:#fff"></i></div>
<div class="inp" style="left:2476px;top:924px;width:304px;height:72px"></div>
<div class="t hash" style="top:960px">#</div>
<div class="t val" style="top:960px">FFFFFF</div>
<div class="inp" style="left:2800px;top:924px;width:160px;height:72px"></div>
<div class="t val" style="left:2832px;top:960px">0</div>

<div class="t h" style="top:1086px">SHAPE</div>
<div class="t lab" style="top:1150px">Resolution</div>
<div class="b" style="left:2384px;top:1186px;width:72px;height:72px;border-radius:50%;background:#2e2e2e"></div>
<div class="b" style="left:2888px;top:1186px;width:72px;height:72px;border-radius:50%;background:#2e2e2e"></div>
<div class="b" style="left:2488px;top:1218px;width:368px;height:8px;border-radius:4px;background:#333"></div>
<div class="b" style="left:2488px;top:1218px;width:213px;height:8px;border-radius:4px;background:#8a8a8a"></div>
<div class="b" style="left:2683px;top:1204px;width:36px;height:36px;border-radius:50%;background:#fff"></div>
<div class="t lab" style="top:1306px">Distortion</div>
<div class="b" style="left:2384px;top:1342px;width:72px;height:72px;border-radius:50%;background:#2e2e2e"></div>
<div class="b" style="left:2888px;top:1342px;width:72px;height:72px;border-radius:50%;background:#2e2e2e"></div>
<div class="b" style="left:2488px;top:1374px;width:368px;height:8px;border-radius:4px;background:#333"></div>
<div class="b" style="left:2488px;top:1374px;width:147px;height:8px;border-radius:4px;background:#8a8a8a"></div>
<div class="b" style="left:2617px;top:1360px;width:36px;height:36px;border-radius:50%;background:#fff"></div>

<div class="t h" style="top:1666px">DOWNLOAD</div>
<div class="b" style="left:2384px;top:1718px;width:276px;height:72px;border-radius:17px;background:#6a5ee8"></div>
<div class="t" style="left:2384px;top:1754px;width:276px;text-align:center;font-size:27.500px;color:#fff;-webkit-text-stroke:.6px #fff">SVG</div>
<div class="b" style="left:2676px;top:1710px;width:292px;height:88px;box-sizing:border-box;border:8px solid #4a4775;border-radius:24px;background:#3e3e3e"></div>
<div class="t" style="left:2676px;top:1754px;width:292px;text-align:center;font-size:28px;letter-spacing:.5px;color:#fff;-webkit-text-stroke:.6px #fff">PNG</div>

<svg class="b" style="left:2352px;top:246px" width="640" height="1590" viewBox="2352 246 640 1590" fill="none" stroke-linecap="round" stroke-linejoin="round">
<path d="M2907 406L2915 414L2907 422" stroke="#666" stroke-width="3"/>
<path d="M2915 574L2924 564L2933 574" stroke="#eee" stroke-width="4"/>
<path d="M2915 1091L2924 1081L2933 1091" stroke="#eee" stroke-width="4"/>
<path d="M2892 795H2924M2901 795V790A3 3 0 0 1 2904 787H2912A3 3 0 0 1 2915 790V795M2895 796V818A4 4 0 0 0 2899 822H2917A4 4 0 0 0 2921 818V796M2904 803V814M2912 803V814" stroke="#fff" stroke-width="3.500"/>
<path d="M2921 948L2928 941L2935 948" stroke="#666" stroke-width="3.500"/>
<path d="M2921 973L2928 980L2935 973" stroke="#555" stroke-width="3.500"/>
<path d="M2407 1222H2433" stroke="#666" stroke-width="3"/>
<path d="M2924 1208V1236M2910 1222H2938" stroke="#666" stroke-width="3"/>
<rect x="2404" y="1362" width="32" height="32" stroke="#666" stroke-width="3" stroke-linejoin="miter"/>
<path d="M2924 1363L2941 1369L2936 1393L2912 1391L2907 1374Z" stroke="#666" stroke-width="3"/>
</svg>
</div>
</body></html>
